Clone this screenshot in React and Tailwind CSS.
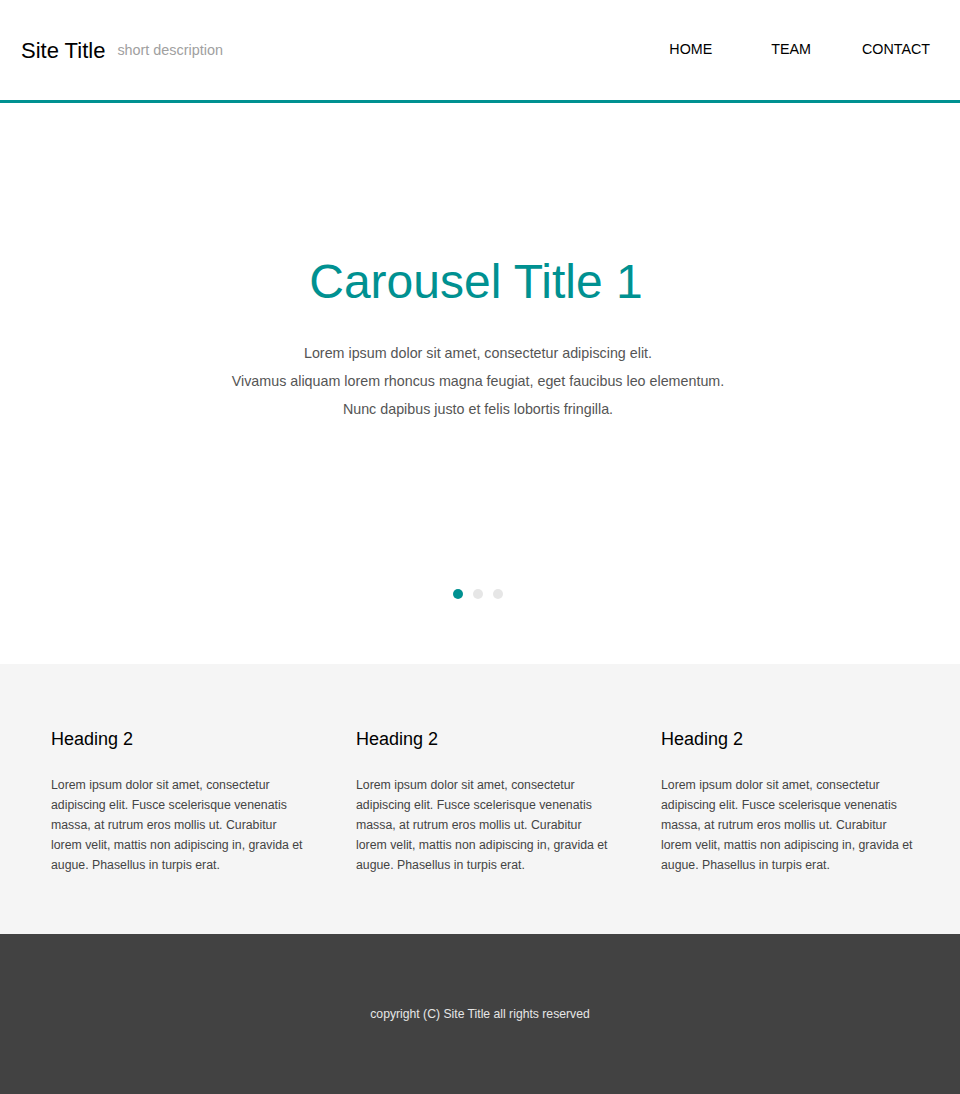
const navLinks = [
  { label: 'HOME', cls: '' },
  { label: 'TEAM', cls: 'ml-[59px]' },
  { label: 'CONTACT', cls: 'ml-[51px]' },
];

const features = [1, 2, 3];

const App = () => {
  return (
    <div className="min-h-screen bg-white font-['Liberation_Sans',Arial,sans-serif]">
      {/* Header */}
      <header className="h-[103px] border-b-[3px] border-[#009191] flex items-center justify-between pl-[21px] pr-[30px]">
        <div className="flex items-center">
          <span className="text-[22px] text-black">Site Title</span>
          <span className="ml-[12px] mt-[1px] text-[14.4px] text-[#a0a0a0]">short description</span>
        </div>
        <nav className="flex items-center text-[14.3px] text-black">
          {navLinks.map((link) => (
            <a key={link.label} href="#" className={link.cls}>
              {link.label}
            </a>
          ))}
        </nav>
      </header>

      {/* Carousel */}
      <section className="h-[561px] flex flex-col items-center">
        <h1 className="mt-[149px] mr-[8px] text-[48px] leading-[60px] text-[#009191]">Carousel Title 1</h1>
        <div className="mt-[27px] mr-[4px] text-center text-[14.3px] leading-[28px] text-[#555]">
          <p>Lorem ipsum dolor sit amet, consectetur adipiscing elit.</p>
          <p>Vivamus aliquam lorem rhoncus magna feugiat, eget faucibus leo elementum.</p>
          <p>Nunc dapibus justo et felis lobortis fringilla.</p>
        </div>
        <div className="mt-[166px] mr-[4px] flex gap-[10px]">
          <span className="w-[10px] h-[10px] rounded-full bg-[#009191]" />
          <span className="w-[10px] h-[10px] rounded-full bg-[#e6e6e6]" />
          <span className="w-[10px] h-[10px] rounded-full bg-[#e6e6e6]" />
        </div>
      </section>

      {/* Features */}
      <section className="h-[270px] bg-[#f5f5f5] pl-[51px] pt-[63px] grid grid-cols-[repeat(3,305px)] content-start">
        {features.map((i) => (
          <div key={i} className="w-[256px]">
            <h2 className="text-[18px] leading-[24px] text-black">Heading 2</h2>
            <p className="mt-[24px] text-[12.3px] leading-[20px] text-[#444]">
              Lorem ipsum dolor sit amet, consectetur adipiscing elit. Fusce scelerisque venenatis massa, at rutrum eros mollis ut. Curabitur lorem velit, mattis non adipiscing in, gravida et augue. Phasellus in turpis erat.
            </p>
          </div>
        ))}
      </section>

      {/* Footer */}
      <footer className="h-[160px] bg-[#424242] flex items-center justify-center">
        <p className="text-[12.2px] text-[#e6e6e6]">copyright (C) Site Title all rights reserved</p>
      </footer>
    </div>
  );
};

export default App;
